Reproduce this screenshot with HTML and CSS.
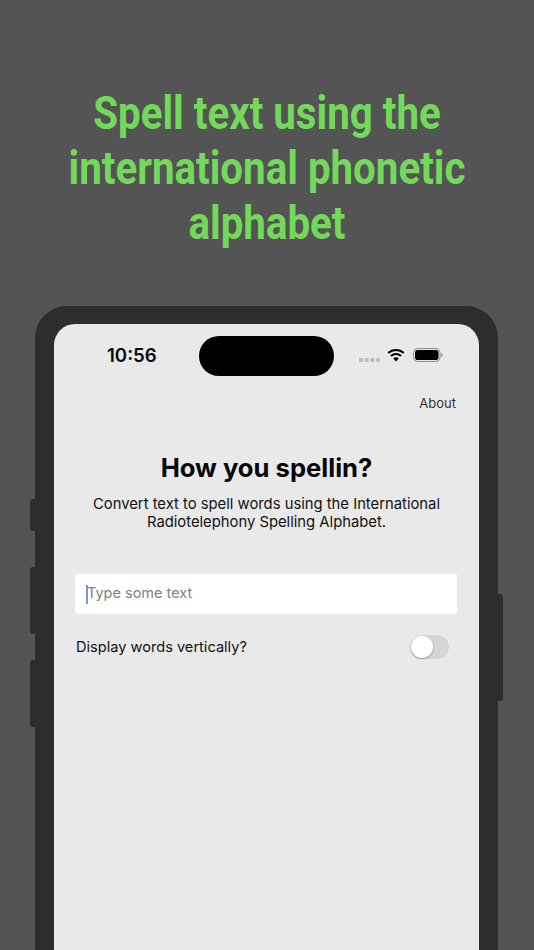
FILE: index.html
```html
<!DOCTYPE html>
<html lang="en">
<head>
<meta charset="utf-8">
<title>How you spellin?</title>
<link rel="stylesheet" href="styles.css">
</head>
<body>
<main class="page">
  <h1 class="headline">Spell text using the international phonetic alphabet</h1>
  <div class="phone">
    <span class="btn btn-mute"></span>
    <span class="btn btn-up"></span>
    <span class="btn btn-down"></span>
    <span class="btn btn-power"></span>
    <div class="screen">
      <div class="status">
        <span class="time">10:56</span>
        <span class="island"></span>
        <span class="status-icons">
          <svg class="dots" width="21" height="4" viewBox="0 0 21 4"><g fill="#bdbdbd"><rect x="0" y="0" width="4" height="4" rx="1"/><rect x="5.6" y="0" width="4" height="4" rx="1"/><rect x="11.2" y="0" width="4" height="4" rx="1"/><rect x="16.8" y="0" width="4" height="4" rx="1"/></g></svg>
          <svg class="wifi" width="18" height="14" viewBox="0 0 18 14"><path d="M1.2 5.1a11.4 11.4 0 0 1 15.6 0" fill="none" stroke="#000" stroke-width="2.1"/><path d="M4 8a7.3 7.3 0 0 1 10 0" fill="none" stroke="#000" stroke-width="2.1"/><path d="M9 13.6 6.2 10.5a4 4 0 0 1 5.6 0z" fill="#000"/></svg>
          <svg class="battery" width="30" height="14" viewBox="0 0 30 14"><rect x="0.5" y="0.5" width="26.5" height="13" rx="4" fill="none" stroke="#8e8e8e"/><rect x="2" y="2" width="23.5" height="10" rx="2.8" fill="#000"/><path d="M28.2 5v4c.9-.3 1.400-1.100 1.400-2s-.5-1.700-1.400-2z" fill="#8e8e8e"/></svg>
        </span>
      </div>
      <nav class="nav"><a class="about">About</a></nav>
      <section class="intro">
        <h2 class="title">How you spellin?</h2>
        <p class="desc">Convert text to spell words using the International Radiotelephony Spelling Alphabet.</p>
      </section>
      <div class="field"><span class="caret"></span><span class="placeholder">Type some text</span></div>
      <div class="option">
        <span class="option-label">Display words vertically?</span>
        <span class="toggle"><span class="knob"></span></span>
      </div>
    </div>
  </div>
</main>
</body>
</html>
```
FILE: styles.css
```css
* { box-sizing: border-box; }
html, body { margin: 0; padding: 0; }
body { background: #545454; width: 534px; height: 950px; overflow: hidden; }
.page { height: 950px; overflow: hidden; padding-top: 85px; }
.headline {
  margin: 0 0 0 -60px;
  width: 654px;
  padding: 0 60px;
  font-family: Roboto, "Liberation Sans", sans-serif;
  font-weight: 700;
  font-size: 47px;
  line-height: 55px;
  color: #73d95a;
  text-align: center;
  transform: scaleX(0.857);
}
.phone {
  position: relative;
  margin: 56px 36px 0 35px;
  width: 463px;
  height: 700px;
  background: #2d2d2d;
  border-radius: 32px 32px 0 0;
  padding: 18px 19px 0 19px;
}
.btn { position: absolute; background: #2d2d2d; width: 6px; }
.btn-mute { left: -5px; top: 193px; height: 32px; border-radius: 3px 0 0 3px; }
.btn-up { left: -5px; top: 261px; height: 67px; border-radius: 3px 0 0 3px; }
.btn-down { left: -5px; top: 354px; height: 67px; border-radius: 3px 0 0 3px; }
.btn-power { right: -5px; top: 288px; height: 107px; border-radius: 0 3px 3px 0; }
.screen {
  background: #e9e9e9;
  height: 100%;
  border-radius: 21px 21px 0 0;
  padding: 12px 22px 0 22px;
  font-family: Inter, "Liberation Sans", sans-serif;
  color: #0a0a0a;
}
.status { display: flex; align-items: center; height: 40px; margin: 0 -22px; padding: 0 34px 0 53px; }
.time { width: 91.500px; font-size: 18.600px; font-weight: 600; line-height: 38px; height: 40px; }
.island { width: 135.500px; height: 40px; background: #000; border-radius: 20px; }
.status-icons { display: flex; align-items: center; margin-left: 25px; }
.dots { margin-top: 8px; margin-right: 7px; }
.wifi { margin-top: -2px; margin-right: 8px; }
.battery { margin-top: -2px; }
.nav { display: flex; justify-content: flex-end; margin-top: 17px; height: 20px; margin-right: 1px; }
.about { font-size: 13px; line-height: 20px; color: #333; }
.intro { text-align: center; margin-top: 40px; }
.title { margin: 0; font-size: 25.600px; font-weight: 700; line-height: 30px; color: #060606; }
.desc { margin: 12px 0 0; font-size: 14.800px; line-height: 18px; color: #111; }
.field {
  display: flex; align-items: center;
  margin: 43px 0 0 -1px; height: 40px; padding-left: 11px;
  background: #fff; border-radius: 2px;
}
.caret { width: 1.500px; height: 19px; background: #7d93d8; flex: none; margin-right: -0.500px; }
.placeholder { font-size: 14.500px; color: #7f7f7f; line-height: 18px; margin-top: -2px; }
.option { display: flex; align-items: center; justify-content: space-between; margin-top: 20px; height: 26px; padding-right: 8px; }
.option-label { font-size: 14.600px; color: #111; }
.toggle { width: 39px; height: 24px; border-radius: 12px; background: #d5d5d5; padding: 1px; }
.knob { display: block; width: 22px; height: 22px; border-radius: 50%; background: #fff; box-shadow: 0 1px 2px rgba(0,0,0,.3); }
```
